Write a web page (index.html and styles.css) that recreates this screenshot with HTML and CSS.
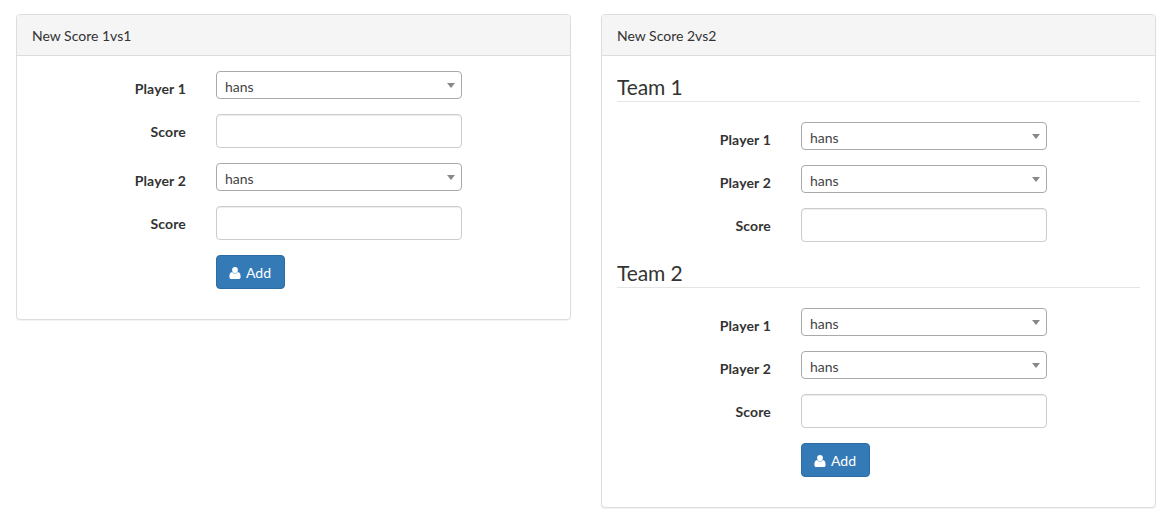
FILE: index.html
```html
<!DOCTYPE html>
<html lang="en">
<head>
<meta charset="utf-8">
<title>New Score</title>
<link rel="stylesheet" href="styles.css">
</head>
<body>
<main class="row">
  <section class="panel">
    <header class="panel-heading">New Score 1vs1</header>
    <form class="panel-body">
      <div class="form-group"><label>Player 1</label><div class="select"><span>hans</span><i class="caret"></i></div></div>
      <div class="form-group"><label>Score</label><div class="input"></div></div>
      <div class="form-group"><label>Player 2</label><div class="select"><span>hans</span><i class="caret"></i></div></div>
      <div class="form-group"><label>Score</label><div class="input"></div></div>
      <div class="form-group"><button type="button" class="btn"><svg class="icon" viewBox="0 0 12 12"><ellipse cx="6" cy="3.100" rx="2.900" ry="3.100"/><path d="M3.200 4.900C1 5 .4 7.200.4 9.900c0 1.300.8 2.100 2 2.100h7.200c1.200 0 2-.8 2-2.100 0-2.700-.6-4.900-2.800-5C8 6 7 6.500 6 6.500S4 6 3.200 4.900z"/></svg>Add</button></div>
    </form>
  </section>
  <section class="panel">
    <header class="panel-heading">New Score 2vs2</header>
    <form class="panel-body">
      <h2 class="legend">Team 1</h2>
      <div class="form-group"><label>Player 1</label><div class="select"><span>hans</span><i class="caret"></i></div></div>
      <div class="form-group"><label>Player 2</label><div class="select"><span>hans</span><i class="caret"></i></div></div>
      <div class="form-group"><label>Score</label><div class="input"></div></div>
      <h2 class="legend">Team 2</h2>
      <div class="form-group"><label>Player 1</label><div class="select"><span>hans</span><i class="caret"></i></div></div>
      <div class="form-group"><label>Player 2</label><div class="select"><span>hans</span><i class="caret"></i></div></div>
      <div class="form-group"><label>Score</label><div class="input"></div></div>
      <div class="form-group"><button type="button" class="btn"><svg class="icon" viewBox="0 0 12 12"><ellipse cx="6" cy="3.100" rx="2.900" ry="3.100"/><path d="M3.200 4.900C1 5 .4 7.200.4 9.900c0 1.300.8 2.100 2 2.100h7.200c1.200 0 2-.8 2-2.100 0-2.700-.6-4.900-2.800-5C8 6 7 6.500 6 6.500S4 6 3.200 4.900z"/></svg>Add</button></div>
    </form>
  </section>
</main>
</body>
</html>
```

FILE: styles.css
```css
* { box-sizing: border-box; }
body {
  margin: 0;
  background: #fff;
  color: #333;
  font: 14px/20px Lato, sans-serif;
}
.row {
  display: grid;
  grid-template-columns: 555px 555px;
  gap: 30px;
  align-items: start;
  padding: 14px 16px;
}
.panel {
  background: #fff;
  border: 1px solid #ddd;
  border-radius: 4px;
  box-shadow: 0 1px 1px rgba(0, 0, 0, .05);
}
.panel-heading {
  padding: 11px 15px 9px;
  background: #f5f5f5;
  border-bottom: 1px solid #ddd;
  border-radius: 3px 3px 0 0;
}
.panel-body { padding: 15px; }
.form-group {
  display: grid;
  grid-template-columns: 154px 246px;
  column-gap: 30px;
  align-items: start;
  margin-bottom: 15px;
}
.form-group label {
  padding-top: 8px;
  font-weight: bold;
  letter-spacing: .15px;
  text-align: right;
}
.select {
  display: flex;
  align-items: center;
  justify-content: space-between;
  height: 28px;
  padding: 3px 6px 0 8px;
  border: 1px solid #aaa;
  border-radius: 4px;
  color: #444;
}
.caret {
  margin-top: -3px;
  border: 4px solid transparent;
  border-top: 5px solid #888;
  border-bottom: 0;
}
.input {
  height: 34px;
  border: 1px solid #ccc;
  border-radius: 4px;
  box-shadow: inset 0 1px 1px rgba(0, 0, 0, .075);
}
.legend {
  margin: 0 0 20px;
  padding-top: 1px;
  height: 31px;
  border-bottom: 1px solid #e5e5e5;
  font-size: 21px;
  font-weight: normal;
  line-height: 30px;
  letter-spacing: -.1px;
}
.btn {
  grid-column: 2;
  justify-self: start;
  display: flex;
  align-items: center;
  width: 69px;
  height: 34px;
  padding: 2px 12px 0;
  border: 1px solid #2e6da4;
  border-radius: 4px;
  background: #337ab7;
  color: #fff;
  font: 14px/20px Lato, sans-serif;
  white-space: nowrap;
}
.icon {
  flex: none;
  width: 12px;
  height: 12px;
  margin-right: 5px;
  fill: #fff;
}
```
